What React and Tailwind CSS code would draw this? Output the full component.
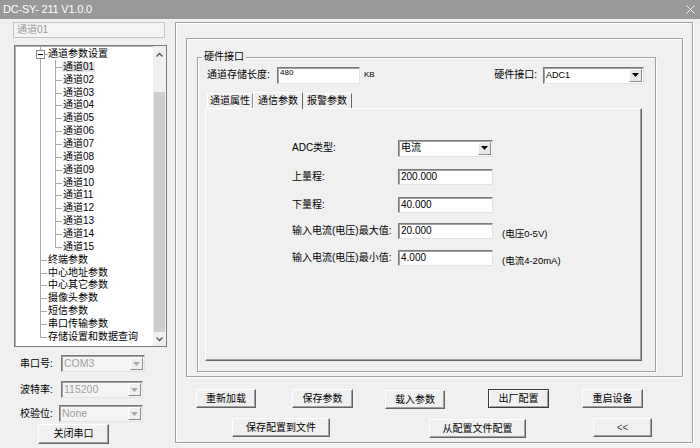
import React from "react";

const channels = Array.from({ length: 15 }, (_, i) => `通道${String(i + 1).padStart(2, "0")}`);
const topItems = ["终端参数", "中心地址参数", "中心其它参数", "摄像头参数", "短信参数", "串口传输参数", "存储设置和数据查询"];

const Arrow = ({ color = "#000" }) => (
  <svg width="7" height="4" viewBox="0 0 7 4">
    <path d="M0 0h7L3.5 4z" fill={color} />
  </svg>
);

// sunken white edit box
const Field = ({ value, className = "" }) => (
  <div
    className={`h-[16px] bg-white border border-t-[#7a7a7a] border-l-[#7a7a7a] border-b-[#e3e3e3] border-r-[#e3e3e3] shadow-[inset_1px_1px_0_#a0a0a0] flex items-center pl-[2px] text-[10px] ${className}`}
  >
    {value}
  </div>
);

const Combo = ({ value, className = "", disabled }) => (
  <div
    className={`h-[17px] border border-t-[#7a7a7a] border-l-[#7a7a7a] border-b-[#e3e3e3] border-r-[#e3e3e3] shadow-[inset_1px_1px_0_#a0a0a0] flex items-center ${
      disabled ? "bg-[#f4f4f4] text-[#a0a0a0]" : "bg-white"
    } ${className}`}
  >
    <span className={`flex-1 pl-[2px] ${disabled ? "text-[10.5px]" : "text-[10px]"}`}>{value}</span>
    <div
      className={`w-[13px] h-[13px] mr-[1px] flex items-center justify-center border border-t-white border-l-white border-b-[#8a8a8a] border-r-[#8a8a8a] ${
        disabled ? "bg-[#f0f0f0]" : "bg-[#e8e8e8]"
      }`}
    >
      <Arrow color={disabled ? "#a8a8a8" : "#000"} />
    </div>
  </div>
);

const Btn = ({ children, className = "", def }) => (
  <div
    className={`h-[19px] shrink-0 flex items-center justify-center text-[10px] bg-[#f0f0f0] border ${
      def
        ? "border-[#3c3c3c] shadow-[inset_1px_1px_0_#fff,inset_-1px_-1px_0_#a0a0a0]"
        : "border-t-white border-l-white border-b-[#646464] border-r-[#646464] shadow-[inset_-1px_-1px_0_#a0a0a0]"
    } ${className}`}
  >
    {children}
  </div>
);

const Line = ({ className }) => <span className={`absolute bg-[#a8a8a8] ${className}`} />;

const Tree = () => (
  <div className="flex-1 pt-[1.5px] overflow-hidden">
    <div className="relative h-[12.86px] flex items-center">
      <Line className="left-[25px] -top-[3px] bottom-0 w-px" />
      <div className="absolute left-[21px] top-[2px] w-[9px] h-[9px] bg-white border border-[#8a8a8a] flex items-center justify-center">
        <span className="w-[5px] h-px bg-black" />
      </div>
      <Line className="left-[30px] top-1/2 w-[3px] h-px" />
      <span className="ml-[33px] text-[10px] leading-none">通道参数设置</span>
    </div>
    {channels.map((c, i) => (
      <div key={c} className="relative h-[12.86px] flex items-center">
        <Line className="left-[25px] top-0 bottom-0 w-px" />
        <Line className={`left-[40px] top-0 w-px ${i === channels.length - 1 ? "h-1/2" : "bottom-0"}`} />
        <Line className="left-[40px] top-1/2 w-[7px] h-px" />
        <span className={`ml-[47px] px-px text-[10px] leading-none ${i === 0 ? "bg-[#e6e6e6]" : ""}`}>{c}</span>
      </div>
    ))}
    {topItems.map((t, i) => (
      <div key={t} className="relative h-[12.86px] flex items-center">
        <Line className={`left-[25px] top-0 w-px ${i === topItems.length - 1 ? "h-1/2" : "bottom-0"}`} />
        <Line className="left-[25px] top-1/2 w-[7px] h-px" />
        <span className="ml-[33px] text-[10px] leading-none whitespace-nowrap">{t}</span>
      </div>
    ))}
  </div>
);

const ScrollBar = () => (
  <div className="w-[13px] flex flex-col bg-[#f0f0f0]">
    <div className="h-[17px] flex items-center justify-center">
      <svg width="7" height="5" viewBox="0 0 7 5">
        <path d="M0.5 4.5L3.5 1.5L6.5 4.5" stroke="#505050" strokeWidth="1.3" fill="none" />
      </svg>
    </div>
    <div className="h-[29px]" />
    <div className="h-[240px] mx-px bg-[#cdcdcd]" />
    <div className="flex-1 flex items-center justify-center">
      <svg width="7" height="5" viewBox="0 0 7 5">
        <path d="M0.5 0.5L3.5 3.5L6.5 0.5" stroke="#505050" strokeWidth="1.3" fill="none" />
      </svg>
    </div>
  </div>
);

const LeftPane = () => (
  <div className="w-[175px] shrink-0 pl-[13px] flex flex-col">
    <div className="mt-[3px] w-[152px] h-[16px] bg-[#f4f4f4] border border-[#c4c4c4] flex items-center pl-[3px] text-[10px] text-[#9a9a9a]">
      通道01
    </div>
    <div className="mt-[7px] ml-px w-[153px] h-[302px] bg-white border border-[#7a7a7a] shadow-[inset_1px_1px_0_#b0b0b0] flex">
      <Tree />
      <ScrollBar />
    </div>
    <div className="mt-[8px] flex items-center h-[17px]">
      <span className="w-[48px] pl-[7px] text-[10px]">串口号:</span>
      <Combo value="COM3" disabled className="w-[84px]" />
    </div>
    <div className="mt-[9px] flex items-center h-[17px]">
      <span className="w-[48px] pl-[7px] text-[10px]">波特率:</span>
      <Combo value="115200" disabled className="w-[82px]" />
    </div>
    <div className="mt-[7px] flex items-center h-[17px]">
      <span className="w-[46px] pl-[7px] text-[10px]">校验位:</span>
      <Combo value="None" disabled className="w-[84px]" />
    </div>
    <Btn className="mt-[2px] ml-[25px] w-[71px] h-[20px]">关闭串口</Btn>
  </div>
);

const etched = "border border-[#a0a0a0] shadow-[inset_1px_1px_0_#fff,1px_1px_0_#fff]";

const formRows = [
  { label: "ADC类型:", value: "电流", combo: true, mt: "mt-[31px]" },
  { label: "上量程:", value: "200.000", mt: "mt-[13px]" },
  { label: "下量程:", value: "40.000", mt: "mt-[12px]" },
  { label: "输入电流(电压)最大值:", value: "20.000", note: "(电压0-5V)", mt: "mt-[10px]" },
  { label: "输入电流(电压)最小值:", value: "4.000", note: "(电流4-20mA)", mt: "mt-[11px]" },
];

const RightPane = () => (
  <div className="flex-1">
    <div className={`mt-[3px] w-[518px] h-[421px] flex flex-col ${etched}`}>
      <div className={`mt-[15px] ml-[10px] w-[497px] h-[339px] ${etched}`}>
        <div className={`relative mt-[18px] ml-[10px] w-[459px] h-[315px] flex flex-col ${etched}`}>
          <span className="absolute -top-[8px] left-[4px] px-[2px] bg-[#f0f0f0] text-[10px] leading-[14px]">硬件接口</span>
          <div className="mt-[8px] h-[18px] pl-[9px] pr-[11px] flex items-center justify-between">
            <div className="flex items-center">
              <span className="w-[70px] text-[10px]">通道存储长度:</span>
              <Field value={<span className="text-[8px] -mt-[4px]">480</span>} className="w-[83px] h-[17px]" />
              <span className="ml-[4px] text-[8px]">KB</span>
            </div>
            <div className="flex items-center">
              <span className="text-[10px]">硬件接口:</span>
              <Combo value={<span className="text-[9px]">ADC1</span>} className="ml-[6px] w-[101px] h-[16px]" />
            </div>
          </div>
          <div className="mt-[8px] h-[16px] pl-[9px] flex items-end">
            <div className="w-[46px] h-[15px] flex items-center justify-center text-[10px] border-t border-l border-t-white border-l-white border-r border-r-[#8a8a8a]">
              通道属性
            </div>
            <div className="w-[50px] h-[17px] -mb-px relative flex items-center justify-center text-[10px] bg-[#f0f0f0] border-t border-l border-t-white border-l-white border-r border-r-[#646464]">
              通信参数
            </div>
            <div className="w-[49px] h-[15px] flex items-center justify-center text-[10px] border-t border-t-white border-r border-r-[#646464]">
              报警参数
            </div>
          </div>
          <div className="ml-[7px] w-[437px] h-[253px] border border-t-white border-l-white border-b-[#646464] border-r-[#646464] shadow-[inset_-1px_-1px_0_#a0a0a0] pl-[86px]">
            {formRows.map((r) => (
              <div key={r.label} className={`${r.mt} h-[16px] flex items-center`}>
                <span className="w-[106px] text-[10px] whitespace-nowrap">{r.label}</span>
                {r.combo ? (
                  <Combo value={r.value} className="w-[95px] h-[16px]" />
                ) : (
                  <Field value={r.value} className="w-[95px]" />
                )}
                {r.note && <span className="ml-[9px] mt-[5px] text-[9.5px]">{r.note}</span>}
              </div>
            ))}
          </div>
        </div>
      </div>
      <div className="mt-[12px] pl-[20px] flex">
        <Btn className="w-[60px]">重新加载</Btn>
        <Btn className="ml-[36px] w-[61px]">保存参数</Btn>
        <Btn className="ml-[32px] w-[60px] mt-[1px]">载入参数</Btn>
        <Btn def className="ml-[43px] w-[61px]">出厂配置</Btn>
        <Btn className="ml-[33px] w-[61px]">重启设备</Btn>
      </div>
      <div className="mt-[9px] pl-[56px] flex">
        <Btn className="w-[98px]">保存配置到文件</Btn>
        <Btn className="ml-[99px] w-[97px] mt-[1px]">从配置文件配置</Btn>
        <Btn className="ml-[67px] w-[59px] text-[#444]">&lt;&lt;</Btn>
      </div>
    </div>
  </div>
);

export default function App() {
  return (
    <div className="w-[700px] h-[448px] bg-[#f0f0f0] flex flex-col overflow-hidden text-black font-['Liberation_Sans','Noto_Sans_CJK_SC',sans-serif] leading-none">
      <div className="h-[19px] shrink-0 bg-[#999999] flex items-center justify-between pl-[3px] pr-[5px]">
        <span className="text-[11px] font-normal text-white tracking-[-0.2px] font-['Liberation_Sans',sans-serif]">DC-SY- 211 V1.0.0</span>
        <svg width="9" height="9" viewBox="0 0 9 9">
          <path d="M0.5 0.5L8.5 8.5M8.5 0.5L0.5 8.5" stroke="#f4f4f4" strokeWidth="1" />
        </svg>
      </div>
      <div className="flex flex-1">
        <LeftPane />
        <RightPane />
      </div>
    </div>
  );
}
